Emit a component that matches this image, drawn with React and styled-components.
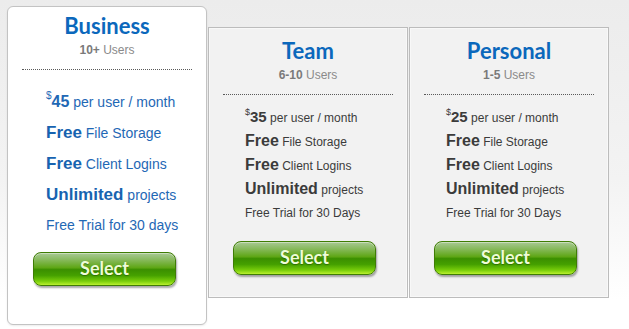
import React from "react";
import styled, { createGlobalStyle, css } from "styled-components";

const Global = createGlobalStyle`
  html, body { margin: 0; padding: 0; }
  body {
    width: 629px;
    height: 329px;
    overflow: hidden;
    background: linear-gradient(to bottom, #ececec 0px, #f3f3f3 180px, #ffffff 300px);
    font-family: "Liberation Sans", Arial, sans-serif;
  }
`;

const Page = styled.div`
  display: flex;
  align-items: flex-start;
  gap: 1px;
  padding: 6px 0 0 7px;
`;

const Card = styled.div`
  box-sizing: border-box;
  width: 200px;
  display: flex;
  flex-direction: column;
  ${(p) =>
    p.$featured
      ? css`
          height: 319px;
          background: #ffffff;
          border: 1px solid #c3c3c3;
          border-radius: 6px;
          padding-top: 5px;
          box-shadow: 0 1px 2px rgba(0, 0, 0, 0.08);
        `
      : css`
          height: 271px;
          margin-top: 21px;
          background: #f2f2f2;
          border: 1px solid #bcbcbc;
          box-shadow: inset 0 0 0 1px #f8f8f8;
          padding-top: 9px;
        `}
`;

const Title = styled.div`
  font-family: Lato, "Open Sans", sans-serif;
  font-weight: 700;
  font-size: 22px;
  line-height: 28px;
  height: 28px;
  text-align: center;
  color: #0b68bc;
`;

const Users = styled.div`
  margin-top: 2px;
  font-size: 12px;
  line-height: 16px;
  text-align: center;
  color: #8a8a8a;
  b { color: #7a7a7a; }
`;

const Divider = styled.div`
  width: 170px;
  margin: 11px auto 0;
  border-top: 1px dotted #5a5a5a;
`;

const List = styled.ul`
  list-style: none;
  margin: ${(p) => (p.$featured ? "16px 0 0" : "10px 0 0")};
  padding: 0 0 0 ${(p) => (p.$featured ? "38px" : "36px")};
  color: ${(p) => (p.$featured ? "#1f68b5" : "#3b3b3b")};
`;

const Item = styled.li`
  height: ${(p) => (p.$featured ? "31px" : "24px")};
  line-height: ${(p) => (p.$featured ? "31px" : "24px")};
  font-size: ${(p) => (p.$featured ? "14px" : "12px")};
  white-space: nowrap;
`;

const Strong = styled.b`
  font-weight: 700;
  font-size: ${(p) => (p.$featured ? "17px" : "16px")};
  ${(p) => p.$featured && "color: #1763b0;"}
`;

const Price = styled.b`
  font-weight: 700;
  font-size: ${(p) => (p.$featured ? "16px" : "15px")};
`;

const Dollar = styled.sup`
  font-size: ${(p) => (p.$featured ? "10px" : "9px")};
  vertical-align: top;
  position: relative;
  top: ${(p) => (p.$featured ? "-6px" : "-5px")};
`;

const Button = styled.button`
  box-sizing: border-box;
  width: 143px;
  height: 34px;
  margin: ${(p) => (p.$featured ? "11px 0 0 25px" : "16px 0 0 24px")};
  padding: 0 0 2px;
  border: 1px solid #3f7d04;
  border-radius: 8px;
  cursor: pointer;
  background: linear-gradient(
    to bottom,
    #a9c995 0%,
    #86b95a 22%,
    #5ea615 46%,
    #3b8f00 52%,
    #45a000 70%,
    #78cd0a 88%,
    #baf02e 100%
  );
  box-shadow: 1px 2px 2px rgba(0, 0, 0, 0.35), inset 0 1px 0 rgba(255, 255, 255, 0.4);
  font-family: Lato, "Open Sans", sans-serif;
  font-weight: 700;
  font-size: 18px;
  color: #effcd8;
  text-shadow: 0 1px 1px rgba(30, 80, 0, 0.6);
`;

const plans = [
  { name: "Business", users: ["10+", " Users"], price: "45", trial: "Free Trial for 30 days", featured: true },
  { name: "Team", users: ["6-10", " Users"], price: "35", trial: "Free Trial for 30 Days" },
  { name: "Personal", users: ["1-5", " Users"], price: "25", trial: "Free Trial for 30 Days" },
];

function Plan({ plan }) {
  const f = plan.featured;
  return (
    <Card $featured={f}>
      <Title>{plan.name}</Title>
      <Users>
        <b>{plan.users[0]}</b>
        {plan.users[1]}
      </Users>
      <Divider />
      <List $featured={f}>
        <Item $featured={f}>
          <Dollar $featured={f}>$</Dollar>
          <Price $featured={f}>{plan.price}</Price> per user / month
        </Item>
        <Item $featured={f}>
          <Strong $featured={f}>Free</Strong> File Storage
        </Item>
        <Item $featured={f}>
          <Strong $featured={f}>Free</Strong> Client Logins
        </Item>
        <Item $featured={f}>
          <Strong $featured={f}>Unlimited</Strong> projects
        </Item>
        <Item $featured={f}>{plan.trial}</Item>
      </List>
      <Button $featured={f}>Select</Button>
    </Card>
  );
}

export default function App() {
  return (
    <>
      <Global />
      <Page>
        {plans.map((p) => (
          <Plan key={p.name} plan={p} />
        ))}
      </Page>
    </>
  );
}
